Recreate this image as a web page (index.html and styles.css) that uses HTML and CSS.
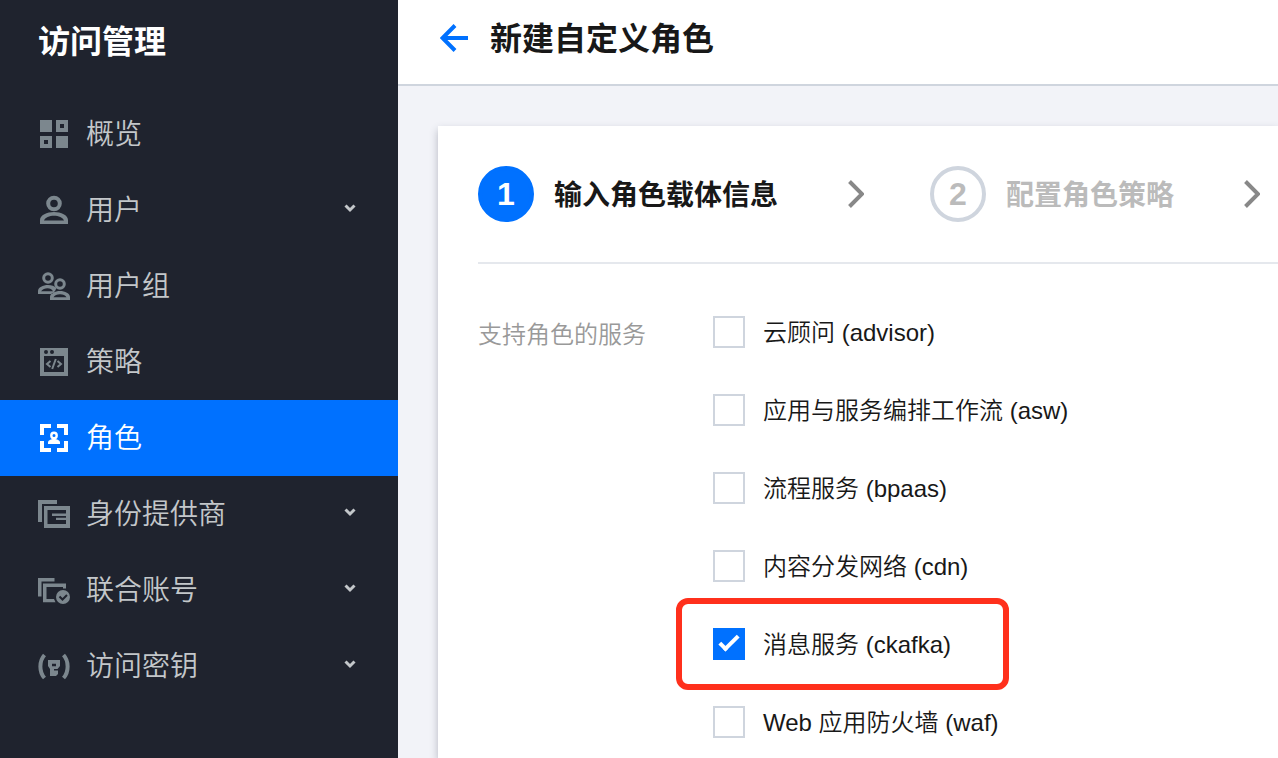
FILE: index.html
```html
<!DOCTYPE html>
<html lang="zh-CN">
<head>
  <meta charset="UTF-8">
  <meta name="viewport" content="width=device-width, initial-scale=1.0">
  <title>新建自定义角色</title>
  <link rel="stylesheet" href="styles.css">
</head>
<body>

  <aside class="sidebar">
    <h2 class="sidebar-title">访问管理</h2>
    <nav class="menu">
      <a href="#" class="menu-item">
        <svg class="menu-icon" viewBox="0 0 32 32"><path fill-rule="evenodd" d="M2 2h12v12H2zM18 2h12v12H18zM22 6v4h4V6zM2 18h12v12H2zM6 22v4h4v-4zM18 18h12v12H18z"/></svg>
        <span class="menu-text">概览</span>
      </a>
      <a href="#" class="menu-item">
        <svg class="menu-icon" viewBox="0 0 32 32"><circle class="line" cx="16" cy="9.5" r="5.8" stroke-width="4"/><path fill-rule="evenodd" d="M2 30v-4c0-5 7-8 14-8s14 3 14 8v4zM6 26.5h20c-1-3-5.500-4.700-10-4.700S7 23.500 6 26.500z"/></svg>
        <span class="menu-text">用户</span>
        <svg class="menu-arrow" viewBox="0 0 12 12"><path d="M1.500 2.500 6 7l4.500-4.500"/></svg>
      </a>
      <a href="#" class="menu-item">
        <svg class="menu-icon" viewBox="0 0 32 32"><circle class="line" cx="10" cy="8" r="4.300" stroke-width="3"/><circle class="line" cx="22" cy="14" r="4.300" stroke-width="3"/><path fill-rule="evenodd" d="M0 24v-3c0-3.500 5-6 10-6 3.500 0 6.500 1 8.500 3l-1.500 3-3 3zM3 21.300h12c-1-2-3-3-5.500-3S4.500 19.300 3 21.300zM12 30v-3c0-3.500 5-6 10-6s10 2.500 10 6v3zM15.500 27.300h13c-1-2-3.500-3-6.500-3s-5.500 1-6.500 3z"/></svg>
        <span class="menu-text">用户组</span>
      </a>
      <a href="#" class="menu-item">
        <svg class="menu-icon" viewBox="0 0 32 32"><path fill-rule="evenodd" d="M2 2h28v28H2zM6 10v16h20V10zM8 4a2 2 0 1 0 0 4 2 2 0 0 0 0-4zM14 4a2 2 0 1 0 0 4 2 2 0 0 0 0-4z"/><path class="line" stroke-width="2" d="M12.500 15 9 18l3.500 3M17.800 13l-3.600 10M19.500 15l3.500 3-3.500 3"/></svg>
        <span class="menu-text">策略</span>
      </a>
      <a href="#" class="menu-item active">
        <svg class="menu-icon" viewBox="0 0 32 32"><path d="M2 2h11v4H6v7H2zM19 2h11v11h-4V6h-7zM2 19h4v7h7v4H2zM26 19h4v11H19v-4h7z"/><circle class="line" cx="16" cy="13.500" r="2.700" stroke-width="2.400"/><path d="M10 22v-1.500c0-2 3-3.500 6-3.500s6 1.500 6 3.500V22z"/></svg>
        <span class="menu-text">角色</span>
      </a>
      <a href="#" class="menu-item">
        <svg class="menu-icon" viewBox="0 0 32 32"><path d="M0 2h19v4H4v18H0z"/><path fill-rule="evenodd" d="M6 8h26v22H6zM9.500 12v14H28V12z"/><path d="M14 15.500h14V18H14zM18 19.700h10V22H18z"/></svg>
        <span class="menu-text">身份提供商</span>
        <svg class="menu-arrow" viewBox="0 0 12 12"><path d="M1.500 2.500 6 7l4.500-4.500"/></svg>
      </a>
      <a href="#" class="menu-item">
        <svg class="menu-icon" viewBox="0 0 32 32"><path d="M0 4h16.500v3.500H3.500v15H0z"/><path d="M5 9.500h23v5h-3V13H8.500v12h7.500l1.500 3.300H5z"/><circle cx="25" cy="23" r="7"/><path class="tick" d="M21.500 22.500l3 3 4.500-4.500"/></svg>
        <span class="menu-text">联合账号</span>
        <svg class="menu-arrow" viewBox="0 0 12 12"><path d="M1.500 2.500 6 7l4.500-4.500"/></svg>
      </a>
      <a href="#" class="menu-item">
        <svg class="menu-icon" viewBox="0 0 32 32"><path class="line" stroke-width="4" d="M6.500 5C1 11 1 22 6.500 28M25.500 5c5.500 6 5.500 17 0 23"/><path fill-rule="evenodd" d="M10 10h12v6l-2.500 3H16v1.500h4V24l-2 2h-6v-7l-2-3zM14 13.700v2.500h4v-2.500z"/></svg>
        <span class="menu-text">访问密钥</span>
        <svg class="menu-arrow" viewBox="0 0 12 12"><path d="M1.500 2.500 6 7l4.500-4.500"/></svg>
      </a>
    </nav>
  </aside>

  <main class="main">
    <header class="header">
      <a href="#" class="back" aria-label="返回">
        <svg viewBox="0 0 28 28"><path d="M28 14H3M15 1.500 2.500 14 15 26.500"/></svg>
      </a>
      <h1 class="title">新建自定义角色</h1>
    </header>

    <section class="card">
      <ol class="steps">
        <li class="step current">
          <span class="step-num">1</span>
          <span class="step-text">输入角色载体信息</span>
          <svg class="step-arrow" viewBox="0 0 16 28"><path d="M1.500 1.500 14 14 1.500 26.500"/></svg>
        </li>
        <li class="step">
          <span class="step-num">2</span>
          <span class="step-text">配置角色策略</span>
          <svg class="step-arrow" viewBox="0 0 16 28"><path d="M1.500 1.500 14 14 1.500 26.500"/></svg>
        </li>
      </ol>

      <form class="form">
        <div class="form-label" id="serviceLabel">支持角色的服务</div>
        <div class="services" role="group" aria-labelledby="serviceLabel">
          <label class="service"><input type="checkbox" name="advisor"><span class="service-text">云顾问 (advisor)</span></label>
          <label class="service"><input type="checkbox" name="asw"><span class="service-text">应用与服务编排工作流 (asw)</span></label>
          <label class="service"><input type="checkbox" name="bpaas"><span class="service-text">流程服务 (bpaas)</span></label>
          <label class="service"><input type="checkbox" name="cdn"><span class="service-text">内容分发网络 (cdn)</span></label>
          <label class="service marked"><input type="checkbox" name="ckafka" checked><span class="service-text">消息服务 (ckafka)</span></label>
          <label class="service"><input type="checkbox" name="waf"><span class="service-text">Web 应用防火墙 (waf)</span></label>
        </div>
      </form>
    </section>
  </main>

</body>
</html>
```

FILE: styles.css
```css
* {
  box-sizing: border-box;
}

body {
  display: flex;
  min-height: 100vh;
  margin: 0;
  overflow: hidden;
  background-color: #f2f3f8;
  color: #181818;
  font-family: "Liberation Sans", "Noto Sans CJK SC", sans-serif;
  font-size: 24px;
}

/* Sidebar */
.sidebar {
  flex: 0 0 398px;
  background-color: #1f232e;
  color: #c3c7ca;
}

.sidebar-title {
  margin: 0;
  padding: 18px 38px 30px;
  color: #fff;
  font-size: 32px;
  line-height: 48px;
}

.menu-item {
  display: flex;
  align-items: center;
  gap: 16px;
  height: 76px;
  padding: 0 42px 0 38px;
  color: #c3c7ca;
  font-size: 28px;
  font-weight: 350;
  line-height: 40px;
  text-decoration: none;
}

.menu-item.active {
  background-color: #0071ff;
  color: #fff;
}

.menu-text {
  flex: 1;
  padding-top: 2px;
}

.menu-icon {
  width: 32px;
  height: 32px;
  fill: #7c878e;
  stroke: #7c878e;
  stroke-width: 0;
}

.menu-icon .line {
  fill: none;
}

.menu-icon .tick {
  fill: none;
  stroke: #1f232e;
  stroke-width: 2;
}

.active .menu-icon {
  fill: #fff;
  stroke: #fff;
}

.menu-arrow {
  width: 12px;
  height: 12px;
  margin-bottom: 2px;
  fill: none;
  stroke: #c3c7ca;
  stroke-width: 3;
}

/* Header */
.main {
  display: flex;
  flex: 1;
  flex-direction: column;
  min-width: 0;
}

.header {
  display: flex;
  align-items: center;
  gap: 22px;
  height: 86px;
  padding: 0 42px 8px;
  border-bottom: 2px solid #cfd5de;
  background-color: #fff;
}

.back svg {
  display: block;
  width: 28px;
  height: 28px;
  fill: none;
  stroke: #0071ff;
  stroke-width: 4;
}

.title {
  margin: 0;
  padding-top: 2px;
  font-size: 32px;
  line-height: 48px;
}

/* Card */
.card {
  flex: 1;
  margin: 40px 0 0 40px;
  padding: 40px 0 0 40px;
  background-color: #fff;
  box-shadow: 0 4px 8px rgba(54, 58, 80, 0.32);
}

.steps {
  display: flex;
  margin: 0;
  padding: 0 0 40px;
  border-bottom: 2px solid #e5e8ed;
  list-style: none;
}

.step {
  display: flex;
  flex: none;
  align-items: center;
  margin-right: 66px;
  color: #bbb;
  font-size: 28px;
  font-weight: bold;
  line-height: 40px;
}

.step-num {
  display: flex;
  align-items: center;
  justify-content: center;
  width: 56px;
  height: 56px;
  margin-right: 20px;
  border: 4px solid #cfd5de;
  border-radius: 50%;
  font-size: 32px;
}

.step-text {
  padding-top: 4px;
}

.step-arrow {
  width: 16px;
  height: 28px;
  margin-left: 70px;
  fill: none;
  stroke: #888;
  stroke-width: 4;
}

.step.current {
  color: #181818;
}

.current .step-num {
  border-color: #0071ff;
  background-color: #0071ff;
  color: #fff;
}

/* Form */
.form {
  display: flex;
  padding: 52px 0 20px;
  font-weight: 350;
  line-height: 32px;
}

.form-label {
  flex: 0 0 235px;
  padding-top: 3px;
  color: #999;
}

.services {
  display: flex;
  flex-direction: column;
  align-items: flex-start;
  gap: 46px;
}

.service {
  position: relative;
  display: flex;
  align-items: center;
  gap: 18px;
  height: 32px;
}

.service-text {
  padding-top: 2px;
}

.service input {
  width: 32px;
  height: 32px;
  margin: 0;
  border: 2px solid #cfd5de;
  background-color: #fff;
  appearance: none;
}

.service input:checked {
  display: flex;
  align-items: center;
  justify-content: center;
  border-color: #0071ff;
  background-color: #0071ff;
}

.service input:checked::after {
  content: "";
  box-sizing: border-box;
  width: 20px;
  height: 10px;
  margin-bottom: 6px;
  border: solid #fff;
  border-width: 0 0 4px 4px;
  transform: rotate(-45deg);
}

/* Red frame around the service to pick */
.marked::after {
  content: "";
  position: absolute;
  inset: -30px -58px -30px -37px;
  border: 6px solid #ff301c;
  border-radius: 12px;
  pointer-events: none;
}
```
